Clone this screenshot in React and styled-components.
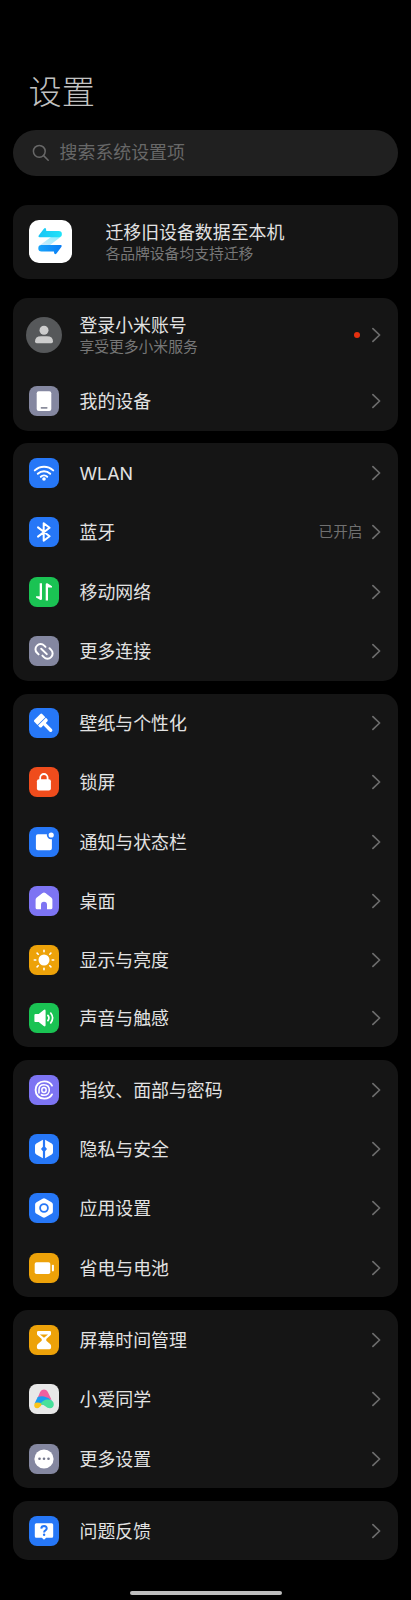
import React from 'react';
import styled, { createGlobalStyle, css } from 'styled-components';

const BLUE = '#2677f7';
const GREEN = '#1ac353';
const GRAY = '#8487a0';
const RED = '#ef4c1c';
const PURPLE = '#7d74f3';
const YELLOW = '#eda209';

const line = {
  fill: 'none',
  stroke: '#fff',
  strokeLinecap: 'round',
  strokeLinejoin: 'round',
};

const icons = {
  device: (
    <>
      <rect x="7.7" y="5.2" width="14.6" height="19.8" rx="2" fill="#fff" />
      <rect x="11.7" y="20.9" width="6.8" height="1.8" rx="0.6" fill="#8b8d9c" />
    </>
  ),
  wifi: (
    <>
      <g {...line} strokeWidth="2">
        <path d="M5.8 12.4a13.2 13.2 0 0 1 18.4 0" />
        <path d="M8.8 15.7a8.9 8.9 0 0 1 12.4 0" />
        <path d="M11.8 18.7a4.7 4.7 0 0 1 6.4 0" />
      </g>
      <circle cx="15" cy="21" r="1.8" fill="#fff" />
    </>
  ),
  bluetooth: (
    <path
      {...line}
      strokeWidth="2"
      d="M9 10.4l11.6 8.9-5.9 4.4V6.3l5.9 4.4L9 19.6"
    />
  ),
  mobile: (
    <path
      fill="#fff"
      d="M10.7 6.2H13v15.5q0 1.6-1.6 1.4L7 20.5v-1.2h3.7zM16.7 23.5H19V10.4h4V9.300l-4.600-3q-1.700-.4-1.700 1.300z"
    />
  ),
  link: (
    <g {...line} strokeWidth="2">
      <path d="M9.6 18.400L8 16.800a5 5 0 0 1 0-7.200 5 5 0 0 1 7.200 0l1.300 1.300" />
      <path d="M20.500 12.300l1.600 1.600a5 5 0 0 1 0 7.200 5 5 0 0 1-7.200 0l-1.500-1.500" />
      <path d="M12.200 12.700l5.600 5.400" />
    </g>
  ),
  brush: (
    <g transform="rotate(-45 15 15)">
      <path
        fill="#fff"
        d="M9 7.300Q9 6 10.300 6h8.500q1.300 0 1.300 1.300v4.500H9zM9 12.600h11.100v1.900q0 1.700-1.700 1.700h-2.100v8.600a1.700 1.700 0 0 1-3.400 0v-8.600h-2.200q-1.700 0-1.700-1.700z"
      />
    </g>
  ),
  lock: (
    <>
      <path {...line} strokeWidth="1.8" d="M11.200 13v-2.300a3.700 3.700 0 0 1 7.400 0V13" />
      <rect x="7.900" y="12.200" width="14" height="11.200" rx="2" fill="#fff" />
    </>
  ),
  notice: (
    <>
      <path
        fill="#fff"
        d="M8.900 7.200h9a4.200 4.200 0 0 0 5 5v9q0 2-2 2h-12q-2 0-2-2v-12q0-2 2-2z"
      />
      <circle cx="22.200" cy="8" r="2.600" fill="#fff" />
    </>
  ),
  home: (
    <path
      fill="#fff"
      d="M13.600 7.100q1.400-1.100 2.800 0l6.100 4.700q.9.8.9 2v7.900q0 1.600-1.600 1.600H18v-4.600a3 3 0 0 0-6 0v4.600H8.200q-1.600 0-1.600-1.600v-7.900q0-1.200.9-2z"
    />
  ),
  sun: (
    <>
      <circle cx="15" cy="15" r="5.500" fill="#fff" />
      <path
        {...line}
        strokeWidth="1.600"
        d="M15 5.300v1.500M15 23.200v1.500M5.300 15h1.500M23.200 15h1.500M8.100 8.100l1.100 1.100M20.800 20.800l1.100 1.100M8.100 21.900l1.100-1.100M20.800 9.200l1.100-1.100"
      />
    </>
  ),
  sound: (
    <>
      <path
        fill="#fff"
        d="M6.600 10.900h3.100l5-4q1.900-1.100 1.900 1v14.200q0 2.100-1.900 1l-5-4H6.600q-1.200 0-1.200-1.200V12.100q0-1.200 1.200-1.200z"
      />
      <path
        {...line}
        strokeWidth="1.700"
        d="M18.900 12.400a4.200 4.200 0 0 1 0 5.200M21.700 10.100a8 8 0 0 1 0 9.800"
      />
    </>
  ),
  finger: (
    <g {...line}>
      <path
        strokeWidth="1.900"
        d="M23 10.600C21.700 8 18.700 6.400 15.200 6.400 10.200 6.400 6.600 9.700 6.600 15s3.600 8.600 8.600 8.600c3.500 0 6.500-1.600 7.800-4.200"
      />
      <path
        strokeWidth="1.600"
        d="M10 18v-3.500c0-2.900 2-4.800 4.900-4.800 3.200 0 5.400 2.100 5.400 5.300s-2.200 5.300-5.300 5.300c-1 0-1.900-.2-2.600-.6"
      />
      <ellipse cx="15" cy="15" rx="2.200" ry="2.500" strokeWidth="1.500" />
    </g>
  ),
  shield: (
    <path
      fill="#fff"
      d="M13.900 5.800v7L12 15l1.900 2.200v7l-6.600-3.700Q6 19.700 6 18.300v-6.600q0-1.400 1.300-2.200zM16.100 5.800v7L18 15l-1.900 2.200v7l6.600-3.700q1.300-.8 1.300-2.200v-6.600q0-1.400-1.300-2.200z"
    />
  ),
  hexagon: (
    <>
      <path
        fill="#fff"
        d="M13.600 5.700q1.400-.8 2.800 0l6.100 3.500q1.400.8 1.400 2.400v6.800q0 1.600-1.400 2.400l-6.100 3.500q-1.400.8-2.800 0l-6.100-3.500q-1.400-.8-1.400-2.400v-6.800q0-1.600 1.400-2.400z"
      />
      <circle cx="15" cy="15" r="3.900" fill="none" stroke={BLUE} strokeWidth="1.800" />
    </>
  ),
  battery: (
    <>
      <rect x="5.700" y="9.200" width="15.600" height="11.800" rx="1.800" fill="#fff" />
      <rect x="22.900" y="11.800" width="2" height="6.600" rx="0.800" fill="#fff" />
    </>
  ),
  hourglass: (
    <>
      <path
        fill="#fff"
        d="M9.200 6h11.600Q22 6 22 7.200v1.700q0 .8-.6 1.300l-4.100 3.700v1.900l3.800 3.300q1 .8 1 2v1.500q0 1.600-1.600 1.600h-11q-1.600 0-1.600-1.600v-1.500q0-1.200 1-2l3.800-3.300v-1.900l-4.100-3.700q-.6-.5-.6-1.300V7.200Q8 6 9.200 6z"
      />
      <path fill={YELLOW} d="M10.900 9.400h8.200L15 12.800z" />
    </>
  ),
  xiaoai: (
    <>
      <path
        fill="#f0609f"
        d="M10.900 8.500Q12.300 5.400 15 5.400t4.100 3.100l3.400 7.300-13.900-1.700z"
      />
      <path
        fill="#1c9df0"
        d="M8.700 13.100q2.800-1.200 6.300-.7 4.700.8 7.800 4.400l-7 3.600-8.900.6-1.300-1.400z"
      />
      <path
        fill="#fcc419"
        d="M6.300 18.800q2.400-.8 5.900.2l.9.700q-1.200 3.200-3.600 4.300-4.100.8-4.300-2.400 0-1.500 1.100-2.800z"
      />
      <path
        fill="#48e09b"
        d="M11.200 19.900q3.200-4.100 7.200-4.300 6 .1 6.400 4.400.1 4.100-3.800 4.200-2.500.1-4.600-1.900-2.100-2.200-5.200-2.400z"
      />
    </>
  ),
  more: (
    <>
      <circle cx="15" cy="15" r="9.600" fill="#fff" />
      <g fill="#74778c">
        <circle cx="10.500" cy="14.800" r="1.300" />
        <circle cx="15" cy="14.800" r="1.300" />
        <circle cx="19.500" cy="14.800" r="1.300" />
      </g>
    </>
  ),
  feedback: (
    <>
      <path
        fill="#fff"
        d="M7.300 7.300h15.400q1.500 0 1.500 1.500v11.400q0 1.500-1.500 1.500h-5.500L15 23.700l-2.200-2H7.300q-1.500 0-1.500-1.500V8.800q0-1.500 1.500-1.500z"
      />
      <path
        {...line}
        stroke={BLUE}
        strokeWidth="2"
        strokeLinecap="butt"
        d="M12.300 12.600q.1-2.500 2.800-2.500 2.600.1 2.600 2.300 0 1.200-1.300 2-1.300.8-1.300 2.200"
      />
      <circle cx="15.100" cy="18.700" r="1.200" fill={BLUE} />
    </>
  ),
};

const groups = [
  [
    { icon: 'wifi', color: BLUE, label: 'WLAN' },
    { icon: 'bluetooth', color: BLUE, label: '蓝牙', value: '已开启' },
    { icon: 'mobile', color: GREEN, label: '移动网络' },
    { icon: 'link', color: GRAY, label: '更多连接' },
  ],
  [
    { icon: 'brush', color: BLUE, label: '壁纸与个性化' },
    { icon: 'lock', color: RED, label: '锁屏' },
    { icon: 'notice', color: BLUE, label: '通知与状态栏' },
    { icon: 'home', color: PURPLE, label: '桌面' },
    { icon: 'sun', color: YELLOW, label: '显示与亮度' },
    { icon: 'sound', color: GREEN, label: '声音与触感', tight: true },
  ],
  [
    { icon: 'finger', color: PURPLE, label: '指纹、面部与密码' },
    { icon: 'shield', color: BLUE, label: '隐私与安全' },
    { icon: 'hexagon', color: BLUE, label: '应用设置' },
    { icon: 'battery', color: YELLOW, label: '省电与电池' },
  ],
  [
    { icon: 'hourglass', color: YELLOW, label: '屏幕时间管理' },
    { icon: 'xiaoai', color: '#e8e8e8', label: '小爱同学' },
    { icon: 'more', color: GRAY, label: '更多设置' },
  ],
  [{ icon: 'feedback', color: BLUE, label: '问题反馈' }],
];

function Chevron() {
  return (
    <Arrow viewBox="0 0 10 16">
      <path d="M1.900 1.600L8.600 8l-6.700 6.400" />
    </Arrow>
  );
}

function SettingRow({ icon, color, label, value, tight }) {
  return (
    <Row $tight={tight}>
      <IconBox $color={color} viewBox="0 0 30 30">
        {icons[icon]}
      </IconBox>
      <Label>{label}</Label>
      {value && <Value>{value}</Value>}
      <Chevron />
    </Row>
  );
}

function App() {
  return (
    <Container>
      <GlobalStyle />
      <Title>设置</Title>
      <SearchBar>
        <SearchIcon viewBox="0 0 18 18">
          <circle cx="7.300" cy="7.300" r="5.900" />
          <path d="M11.600 11.600l4.600 4.600" />
        </SearchIcon>
        <SearchText>搜索系统设置项</SearchText>
      </SearchBar>

      <MigrateCard>
        <MigrateIcon viewBox="0 0 43 43">
          <defs>
            <linearGradient id="top" x1="0" x2="1">
              <stop offset="0" stopColor="#19c4f5" />
              <stop offset="1" stopColor="#1fe3f8" />
            </linearGradient>
            <linearGradient id="mid" x1="1" x2="0" y1="0" y2="1">
              <stop offset="0" stopColor="#8beefc" />
              <stop offset="1" stopColor="#d5eafd" />
            </linearGradient>
            <linearGradient id="bottom" x1="0" x2="1">
              <stop offset="0" stopColor="#18a4fa" />
              <stop offset="1" stopColor="#0a7df5" />
            </linearGradient>
          </defs>
          <path fill="url(#mid)" d="M22 17h9.500L20.500 25.500H10.500z" />
          <path
            fill="url(#top)"
            d="M9.700 15.600l5-6.700q1.900-1.900 2.400.6l.2 1.400h12.400a3.200 3.200 0 0 1 0 6.400H10.500q-1.700-.2-.8-1.700z"
          />
          <path
            fill="url(#bottom)"
            d="M32.500 26.700l-5 6.700q-1.900 1.900-2.400-.6l-.2-1.400H12.500a3.200 3.200 0 0 1 0-6.400h19.200q1.700.2.800 1.700z"
          />
        </MigrateIcon>
        <TextWrap>
          <Label>迁移旧设备数据至本机</Label>
          <SubText>各品牌设备均支持迁移</SubText>
        </TextWrap>
      </MigrateCard>

      <List>
        <Card>
          <AccountRow>
            <Avatar viewBox="0 0 36 36">
              <circle cx="18" cy="13.200" r="4.500" />
              <path d="M9 24.600q0-5.300 6-5.300h6q6 0 6 5.300 0 1.700-1.700 1.700H10.700Q9 26.300 9 24.600z" />
            </Avatar>
            <TextWrap>
              <Label>登录小米账号</Label>
              <SubText>享受更多小米服务</SubText>
            </TextWrap>
            <Dot />
            <Chevron />
          </AccountRow>
          <SettingRow icon="device" color={GRAY} label="我的设备" />
        </Card>
        {groups.map((rows) => (
          <Card key={rows[0].label}>
            {rows.map((row) => (
              <SettingRow key={row.label} {...row} />
            ))}
          </Card>
        ))}
      </List>
      <HomeBar />
    </Container>
  );
}

export default App;

const GlobalStyle = createGlobalStyle`
  * {
    box-sizing: border-box;
  }
  body {
    margin: 0;
    background: #000;
    font-family: Inter, 'Noto Sans CJK SC', sans-serif;
  }
`;
const Container = styled.div`
  width: 411px;
  height: 1600px;
  padding: 67px 12.6px 0;
  overflow: hidden;
  background: #000;
`;
const Title = styled.h1`
  margin: 0 0 12.5px;
  padding-left: 16px;
  height: 50px;
  line-height: 50px;
  font-size: 33.2px;
  font-weight: 300;
  color: #c2c2c2;
`;
const SearchBar = styled.div`
  display: flex;
  align-items: center;
  gap: 10px;
  height: 46.5px;
  padding-left: 19px;
  border-radius: 23.5px;
  background: #202020;
`;
const SearchIcon = styled.svg`
  width: 18px;
  height: 18px;
  fill: none;
  stroke: #686868;
  stroke-width: 1.5;
  stroke-linecap: round;
`;
const SearchText = styled.span`
  padding-top: 1px;
  font-size: 17.9px;
  line-height: 26px;
  color: #686868;
`;
const cardStyle = css`
  border-radius: 15px;
  background: #151515;
`;
const MigrateCard = styled.div`
  ${cardStyle}
  display: flex;
  align-items: center;
  gap: 33px;
  height: 73.4px;
  margin-top: 29.3px;
  padding-left: 16.8px;
`;
const MigrateIcon = styled.svg`
  width: 43px;
  height: 43px;
  border-radius: 10px;
  background: #fff;
`;
const TextWrap = styled.div`
  display: flex;
  flex: 1;
  flex-direction: column;
  padding-top: 1px;
`;
const Label = styled.div`
  flex: 1;
  padding-top: 1px;
  font-size: 17.9px;
  line-height: 23px;
  color: #e2e2e2;
`;
const SubText = styled.div`
  font-size: 14.8px;
  line-height: 20px;
  color: #777;
`;
const List = styled.div`
  display: flex;
  flex-direction: column;
  gap: 12.9px;
  margin-top: 19.3px;
`;
const Card = styled.div`
  ${cardStyle}
`;
const Row = styled.div`
  display: flex;
  align-items: center;
  height: 59.3px;
  margin-top: ${({ $tight }) => ($tight ? '-2px' : '0')};
  padding: 0 17px 0 16.9px;
`;
const AccountRow = styled(Row)`
  height: 73.3px;
  padding-left: 13.6px;
`;
const IconBox = styled.svg`
  flex-shrink: 0;
  width: 30px;
  height: 30px;
  margin-right: 20px;
  border-radius: 8px;
  background: ${({ $color }) => $color};
`;
const Avatar = styled.svg`
  width: 36px;
  height: 36px;
  margin-right: 17.2px;
  border-radius: 50%;
  background: #56585a;
  fill: #cdcdcd;
`;
const Value = styled.span`
  margin-right: 9px;
  padding-bottom: 1px;
  font-size: 14.6px;
  line-height: 20px;
  color: #707070;
`;
const Dot = styled.span`
  width: 6px;
  height: 6px;
  margin-right: 11.5px;
  border-radius: 50%;
  background: #e5300f;
`;
const Arrow = styled.svg`
  flex-shrink: 0;
  width: 10px;
  height: 16px;
  fill: none;
  stroke: #6c6c6c;
  stroke-width: 1.7;
  stroke-linecap: round;
  stroke-linejoin: round;
`;
const HomeBar = styled.div`
  width: 152px;
  height: 4px;
  margin: 30.5px auto 0;
  border-radius: 2px;
  background: #bdbdbd;
`;
